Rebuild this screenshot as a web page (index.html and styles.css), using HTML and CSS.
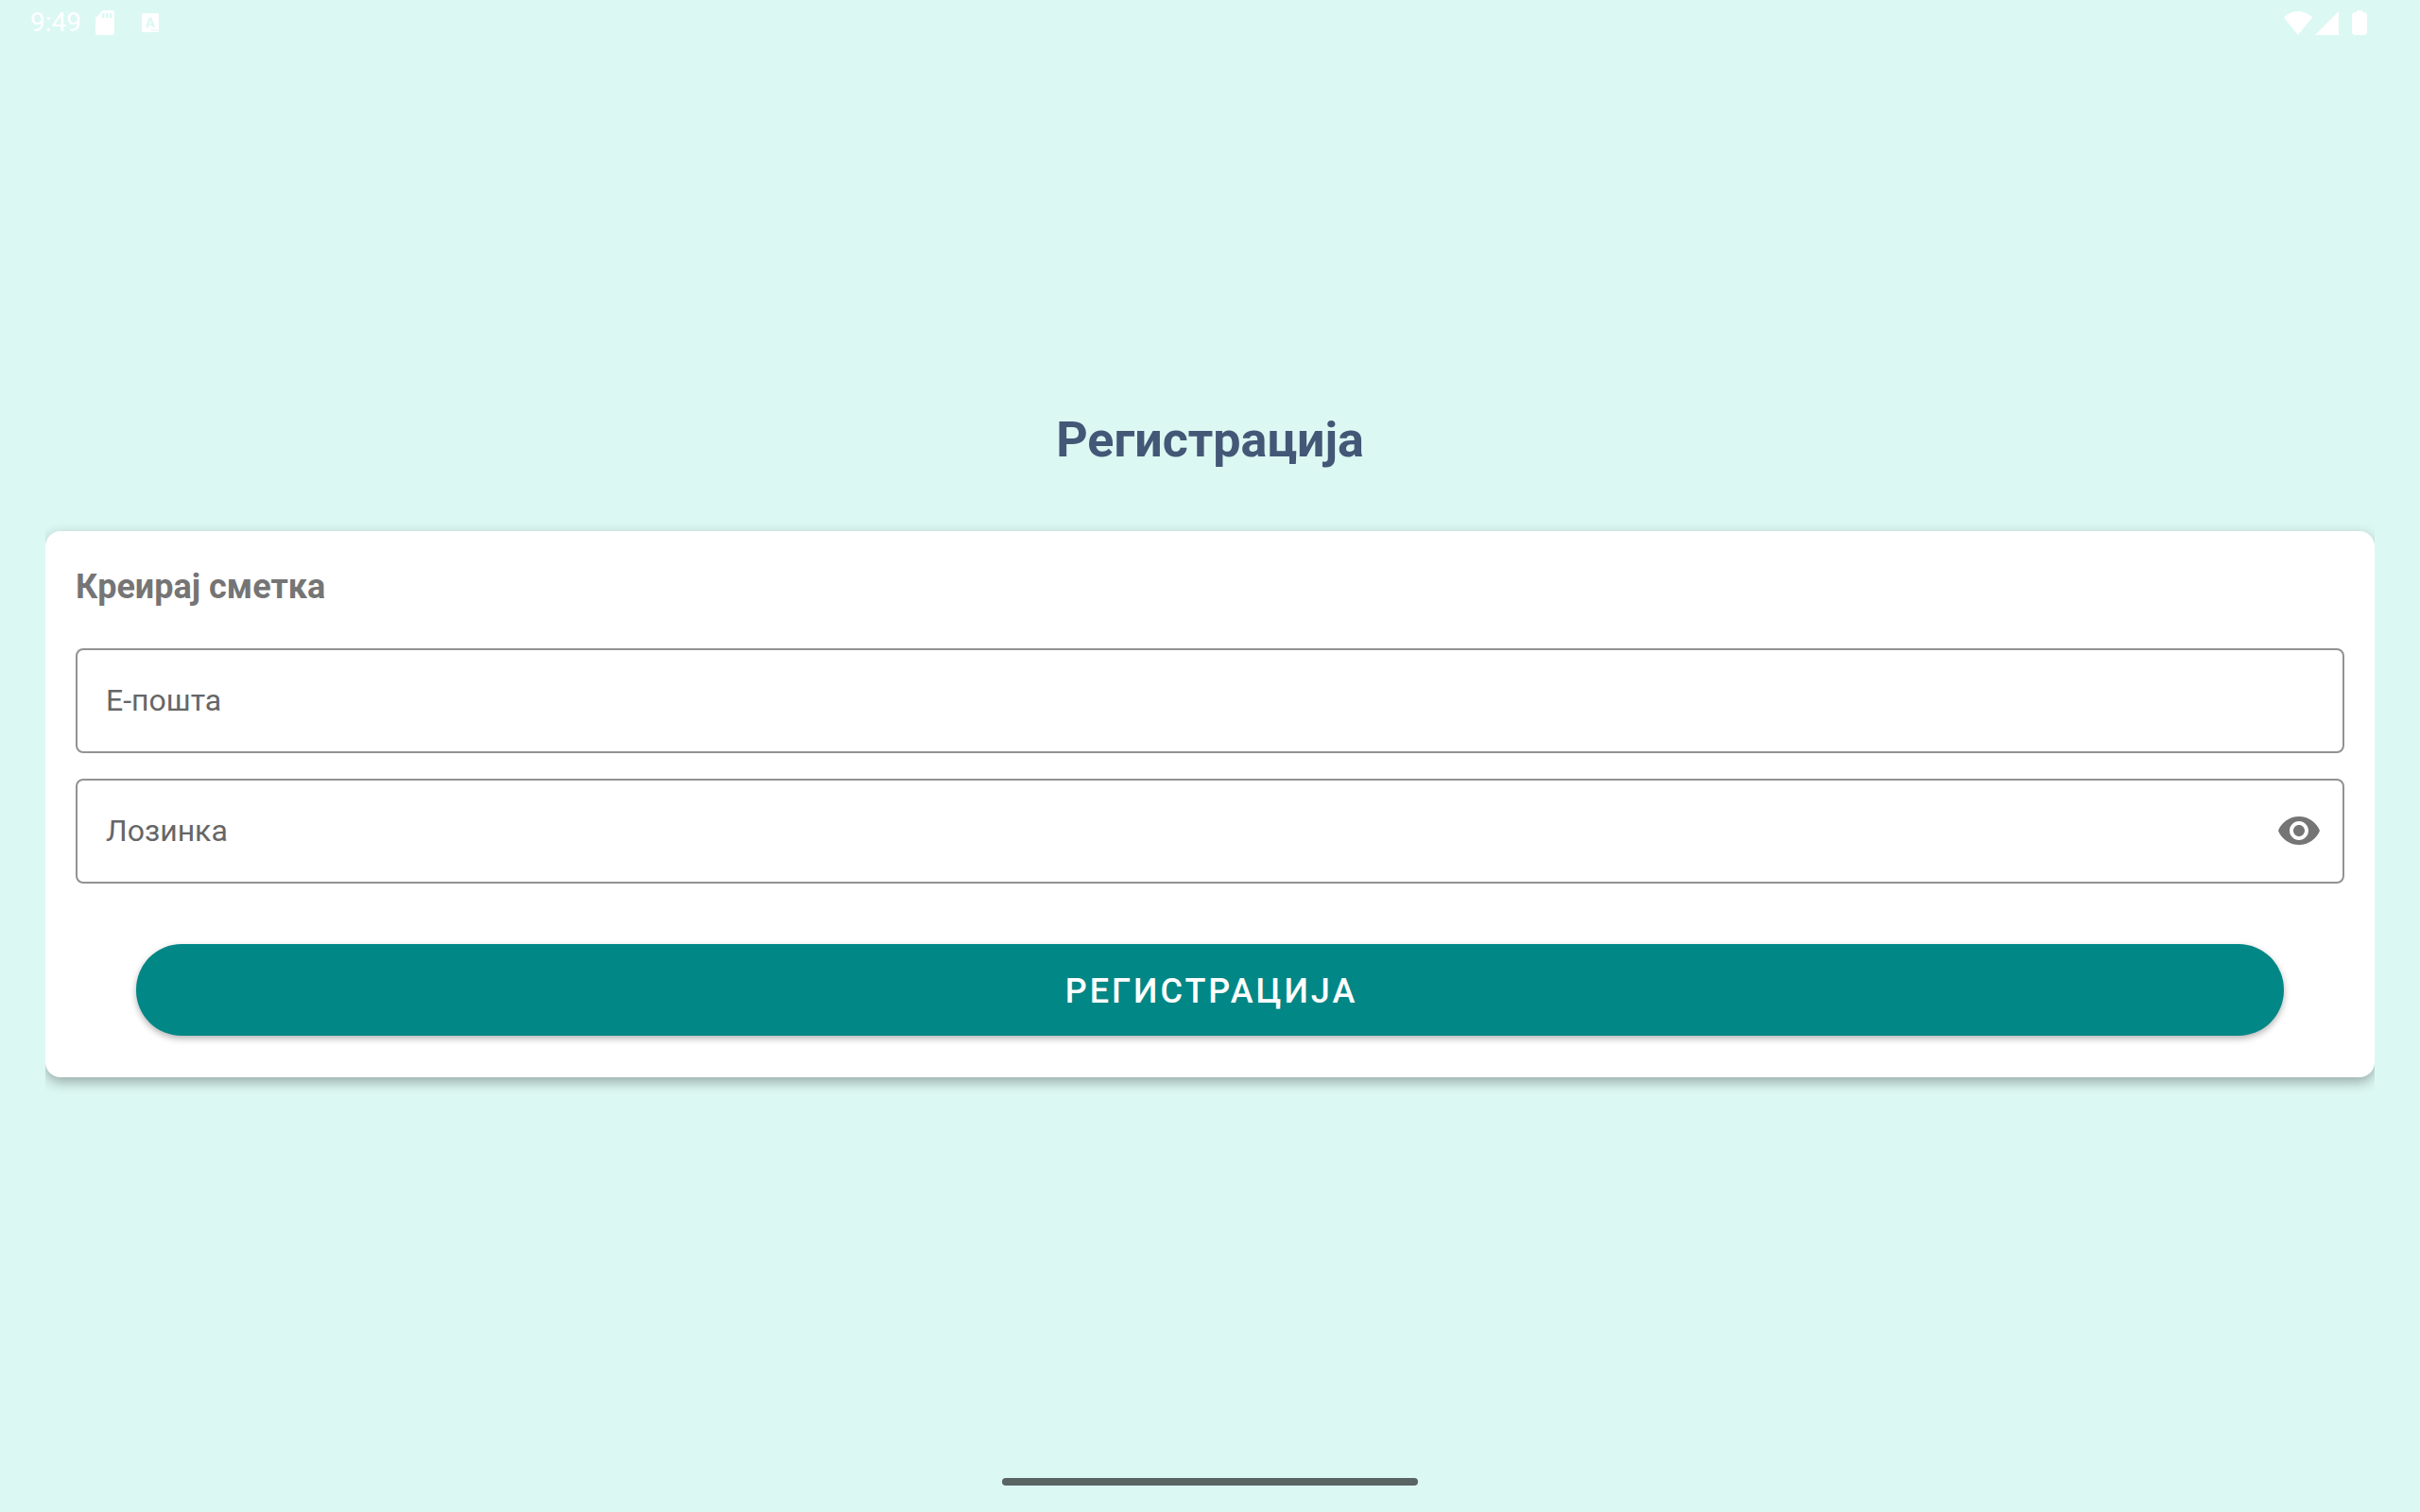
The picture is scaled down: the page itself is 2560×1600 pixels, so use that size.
FILE: index.html
```html
<!DOCTYPE html>
<html lang="mk">
<head>
<meta charset="utf-8">
<meta name="viewport" content="width=device-width, initial-scale=1">
<title>Регистрација</title>
<link rel="stylesheet" href="styles.css">
</head>
<body>
<header class="status">
  <div class="status-group">
    <time class="clock">9:49</time>
    <svg class="sd" width="20" height="26" viewBox="0 0 20 26" aria-hidden="true"><path fill-rule="evenodd" d="M8 0h9.500A2.500 2.500 0 0 1 20 2.500v21A2.500 2.500 0 0 1 17.500 26h-15A2.500 2.500 0 0 1 0 23.500V8zM7 3v5h2.500V3zM11 3v5h2.500V3zM15 3v5h2.500V3z"/></svg>
    <svg class="app" width="18" height="20" viewBox="0 0 18 20" aria-hidden="true"><path fill-rule="evenodd" d="M1.500 0h15A1.500 1.500 0 0 1 18 1.500v17a1.500 1.500 0 0 1-1.500 1.500h-15A1.500 1.500 0 0 1 0 18.500v-17A1.500 1.500 0 0 1 1.500 0zM7.800 4.500 4 15h2.500l.7-2.200h3.700l.7 2.200h2.500L10.300 4.500zM9 7.300l1.200 3.600H7.900zM10 17v1.500h1.500V17zM12.700 17v1.500h1.500V17zM15.300 17v1.500h1.500V17z"/></svg>
  </div>
  <div class="status-group">
    <svg width="30" height="25" viewBox="0 0 30 25" aria-hidden="true"><path d="M15 25 0 6.500C4 2.500 9 0 15 0s11 2.500 15 6.500z"/></svg>
    <svg class="signal" width="26" height="25" viewBox="0 0 26 25" aria-hidden="true"><path d="M0 25 25 0v25z"/></svg>
    <svg class="battery" width="16" height="26" viewBox="0 0 16 26" aria-hidden="true"><path d="M5 0h6v2h3l2 2v20l-2 2H2l-2-2V4l2-2h3z"/></svg>
  </div>
</header>
<main class="page">
  <h1 class="title">Регистрација</h1>
  <form class="card">
    <h2 class="card-title">Креирај сметка</h2>
    <div class="field">
      <label for="email">Е-пошта</label>
      <input id="email" type="email">
    </div>
    <div class="field">
      <label for="password">Лозинка</label>
      <input id="password" type="password">
      <button class="reveal" type="button">
        <svg width="48" height="48" viewBox="0 0 24 24" aria-hidden="true"><path d="M12 4.500C7 4.500 2.730 7.610 1 12c1.730 4.390 6 7.500 11 7.500s9.270-3.110 11-7.500c-1.730-4.390-6-7.500-11-7.500zM12 17c-2.760 0-5-2.240-5-5s2.240-5 5-5 5 2.240 5 5-2.240 5-5 5zm0-8c-1.660 0-3 1.340-3 3s1.340 3 3 3 3-1.340 3-3-1.340-3-3-3z"/></svg>
      </button>
    </div>
    <button class="submit" type="submit">РЕГИСТРАЦИЈА</button>
  </form>
</main>
<footer class="nav"><div class="handle"></div></footer>
</body>
</html>
```
FILE: styles.css
```css
* {
  box-sizing: border-box;
}

body {
  margin: 0;
  min-height: 100vh;
  display: flex;
  flex-direction: column;
  background: #dcf8f3;
  font-family: Roboto, "Noto Sans", sans-serif;
}

.status {
  height: 48px;
  padding: 0 56px 0 32px;
  display: flex;
  align-items: center;
  justify-content: space-between;
  color: #fff;
}

.status-group {
  display: flex;
  align-items: center;
}

.status svg {
  display: block;
  fill: currentColor;
}

.clock {
  font-size: 28px;
  line-height: 32px;
}

.sd {
  margin-left: 15px;
}

.app {
  margin-left: 29px;
}

.signal {
  margin-left: 3px;
}

.battery {
  margin-left: 13px;
}

.page {
  flex: 1;
  display: flex;
  flex-direction: column;
  justify-content: center;
  padding: 0 48px 9px;
}

.title {
  margin: 0 0 65px;
  font-size: 52px;
  line-height: 62px;
  font-weight: 700;
  text-align: center;
  color: #435776;
}

.card {
  display: flex;
  flex-direction: column;
  padding: 32px 32px 44px;
  border-radius: 16px;
  background: #fff;
  box-shadow: 0 5px 14px rgba(0, 0, 0, 0.32);
  /* the shadow shows only above and below the card */
  clip-path: inset(-24px 0);
}

.card-title {
  margin: 0 0 38px;
  font-size: 36px;
  line-height: 54px;
  font-weight: 700;
  color: #757575;
}

.field {
  height: 111px;
  display: flex;
  align-items: center;
  padding: 0 22px 2px 30px;
  border: 2px solid #929292;
  border-radius: 8px;
  font-size: 32px;
  line-height: 40px;
  color: #666;
}

.field + .field {
  margin-top: 27px;
}

.field input {
  flex: 1;
  min-width: 0;
  height: 100%;
  padding: 0 16px;
  border: 0;
  outline: 0;
  background: none;
  font: inherit;
  color: #222;
}

.reveal {
  padding: 0;
  border: 0;
  background: none;
}

.reveal svg {
  display: block;
  fill: #757575;
}

.submit {
  height: 97px;
  margin: 64px 64px 0;
  padding: 3px 0 0 3px;
  border: 0;
  border-radius: 48px;
  background: #018786;
  box-shadow: 0 3px 7px rgba(0, 0, 0, 0.3);
  color: #fff;
  font-family: inherit;
  font-size: 36px;
  line-height: 42px;
  font-weight: 500;
  letter-spacing: 3px;
}

.nav {
  height: 64px;
  display: flex;
  align-items: center;
  justify-content: center;
}

.handle {
  width: 440px;
  height: 8px;
  border-radius: 4px;
  background: #5a6462;
}
```
